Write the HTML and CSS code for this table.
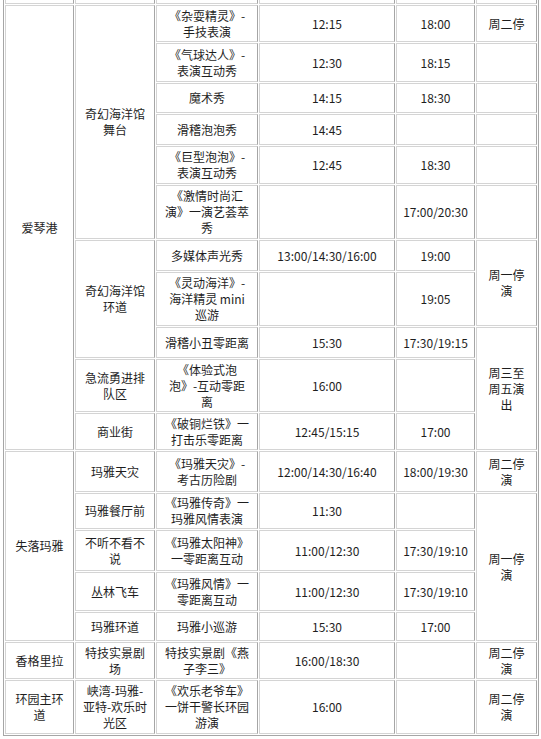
FILE: index.html
```html
<!DOCTYPE html>
<html lang="zh-CN">
<head>
<meta charset="utf-8">
<title>演出时间表</title>
<link rel="stylesheet" href="styles.css">
</head>
<body>
<table class="sched">
<tr class="cut"><td class="c1"></td><td class="c2"></td><td class="c3"></td><td class="c4"></td><td class="c5"></td><td class="c6"></td></tr>
<tr class="h37"><td rowspan="11">爱琴港</td><td rowspan="6">奇幻海洋馆<br>舞台</td><td>《杂耍精灵》-<br>手技表演</td><td>12:15</td><td>18:00</td><td>周二停</td></tr>
<tr class="h39"><td>《气球达人》-<br>表演互动秀</td><td>12:30</td><td>18:15</td><td></td></tr>
<tr class="h30"><td>魔术秀</td><td>14:15</td><td>18:30</td><td></td></tr>
<tr class="h31"><td>滑稽泡泡秀</td><td>14:45</td><td></td><td></td></tr>
<tr class="h38"><td>《巨型泡泡》-<br>表演互动秀</td><td>12:45</td><td>18:30</td><td></td></tr>
<tr class="h54"><td>《激情时尚汇<br>演》一演艺荟萃<br>秀</td><td></td><td>17:00/20:30</td><td></td></tr>
<tr class="h31"><td rowspan="3">奇幻海洋馆<br>环道</td><td>多媒体声光秀</td><td>13:00/14:30/16:00</td><td>19:00</td><td rowspan="2">周一停<br>演</td></tr>
<tr class="h54"><td>《灵动海洋》-<br>海洋精灵 mini<br>巡游</td><td></td><td>19:05</td></tr>
<tr class="h31"><td>滑稽小丑零距离</td><td>15:30</td><td>17:30/19:15</td><td rowspan="3">周三至<br>周五演<br>出</td></tr>
<tr class="h53"><td>急流勇进排<br>队区</td><td>《体验式泡<br>泡》-互动零距<br>离</td><td>16:00</td><td></td></tr>
<tr class="h37"><td>商业街</td><td>《破铜烂铁》一<br>打击乐零距离</td><td>12:45/15:15</td><td>17:00</td></tr>
<tr class="h41"><td rowspan="5">失落玛雅</td><td>玛雅天灾</td><td>《玛雅天灾》-<br>考古历险剧</td><td>12:00/14:30/16:40</td><td>18:00/19:30</td><td>周二停<br>演</td></tr>
<tr class="h36"><td>玛雅餐厅前</td><td>《玛雅传奇》一<br>玛雅风情表演</td><td>11:30</td><td></td><td rowspan="4">周一停<br>演</td></tr>
<tr class="h41"><td>不听不看不<br>说</td><td>《玛雅太阳神》<br>一零距离互动</td><td>11:00/12:30</td><td>17:30/19:10</td></tr>
<tr class="h39"><td>丛林飞车</td><td>《玛雅风情》一<br>零距离互动</td><td>11:00/12:30</td><td>17:30/19:10</td></tr>
<tr class="h29"><td>玛雅环道</td><td>玛雅小巡游</td><td>15:30</td><td>17:00</td></tr>
<tr class="h37"><td>香格里拉</td><td>特技实景剧<br>场</td><td>特技实景剧《燕<br>子李三》</td><td>16:00/18:30</td><td></td><td>周二停<br>演</td></tr>
<tr class="h54"><td>环园主环<br>道</td><td>峡湾-玛雅-<br>亚特-欢乐时<br>光区</td><td>《欢乐老爷车》<br>一饼干警长环园<br>游演</td><td>16:00</td><td></td><td>周二停<br>演</td></tr>
</table>
</body>
</html>
```
FILE: styles.css
```css
html, body {
  margin: 0;
  padding: 0;
  background: #ffffff;
}

.sched {
  margin: -10px 0 0 3px;
  table-layout: fixed;
  width: 536px;
  border-collapse: separate;
  border-spacing: 1px;
  border-style: solid;
  border-width: 1px;
  border-color: #d4d4d4 #a6a6a6 #a6a6a6 #a6a6a6;
  font-family: "Noto Sans CJK SC", "Noto Sans", sans-serif;
  font-size: 12px;
  line-height: 16px;
  color: #1e1e1e;
}

.sched td {
  box-sizing: border-box;
  padding: 0 4px;
  text-align: center;
  vertical-align: middle;
  border: 1px solid #d4d4d4;
  border-right-color: #a6a6a6;
  white-space: nowrap;
}

.cut { height: 12px; }
.cut td { padding: 0; }

.c1 { width: 69px; }
.c2 { width: 80px; }
.c3 { width: 102px; }
.c4 { width: 136px; }
.c5 { width: 79px; }
.c6 { width: 61px; }

.h29 { height: 29px; }
.h30 { height: 30px; }
.h31 { height: 31px; }
.h36 { height: 36px; }
.h37 { height: 37px; }
.h38 { height: 38px; }
.h39 { height: 39px; }
.h41 { height: 41px; }
.h53 { height: 53px; }
.h54 { height: 54px; }
```
